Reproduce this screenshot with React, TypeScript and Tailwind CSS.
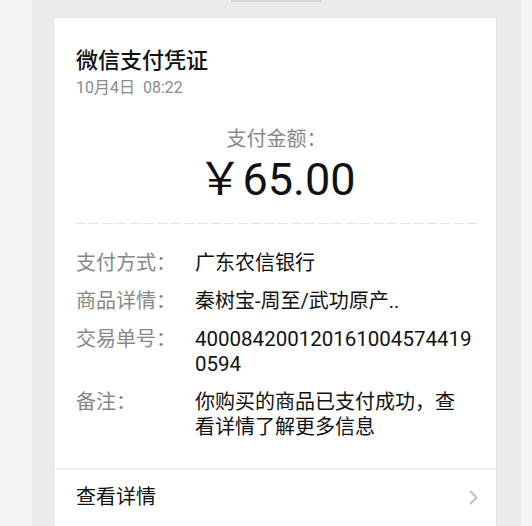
export default function App() {
  const rows: { label: string; value: string; num?: boolean }[] = [
    { label: "支付方式：", value: "广东农信银行" },
    { label: "商品详情：", value: "秦树宝-周至/武功原产.." },
    { label: "交易单号：", value: "4000842001201610045744190594", num: true },
    { label: "备注：", value: "你购买的商品已支付成功，查看详情了解更多信息" },
  ];
  return (
    <div className="w-[532px] h-[526px] overflow-hidden bg-[#f5f5f5] flex font-[family-name:Roboto,'Noto_Sans_CJK_SC',sans-serif]">
      <div className="ml-[32px] w-[489px] h-full bg-[#ebebeb] flex flex-col">
        <div className="h-[2px] ml-[199px] w-[91px] bg-[#d5d5d5] shrink-0" />
        <div className="mt-[15px] ml-[21px] w-[444px] flex-1 bg-white border border-[#e2e2e2] flex flex-col">
          <div className="pl-[22px] pt-[28px] pb-[28px] pr-[19px]">
            <div className="text-[22px] leading-[30px] font-medium text-[#111]">微信支付凭证</div>
            <div className="mt-[2px] text-[16px] leading-[20px] text-[#8a8a8a]">10月4日&nbsp;&nbsp;08:22</div>
            <div className="mt-[28px] text-center text-[20px] leading-[26px] text-[#888]">支付金额：</div>
            <div className="mt-[3px] text-center text-[45px] leading-[50px] text-[#111]">￥65.00</div>
            <div className="mt-[18px] h-px bg-[repeating-linear-gradient(to_right,#e3e3e3_0_10px,transparent_10px_13.5px)]" />
            <div className="mt-[27px] flex flex-col gap-[13px]">
              {rows.map((r) => (
                <div key={r.label} className="flex text-[20px] leading-[25px]">
                  <div className="w-[119px] shrink-0 text-[#888]">{r.label}</div>
                  <div className={r.num ? "w-[278px] break-all text-[#111] text-[20.5px]" : "w-[278px] break-all text-[#111]"}>{r.value}</div>
                </div>
              ))}
            </div>
          </div>
          <div className="h-[2px] bg-[#efefef]" />
          <div className="flex items-center justify-between pl-[22px] pr-[17px] pt-[15px] pb-[20px]">
            <div className="text-[20px] leading-[25px] text-[#111]">查看详情</div>
            <svg width="11" height="17" viewBox="0 0 11 17" fill="none">
              <path d="M2 2 L8.5 8.5 L2 15" stroke="#c4c4c4" strokeWidth="2.2" />
            </svg>
          </div>
        </div>
      </div>
    </div>
  );
}
